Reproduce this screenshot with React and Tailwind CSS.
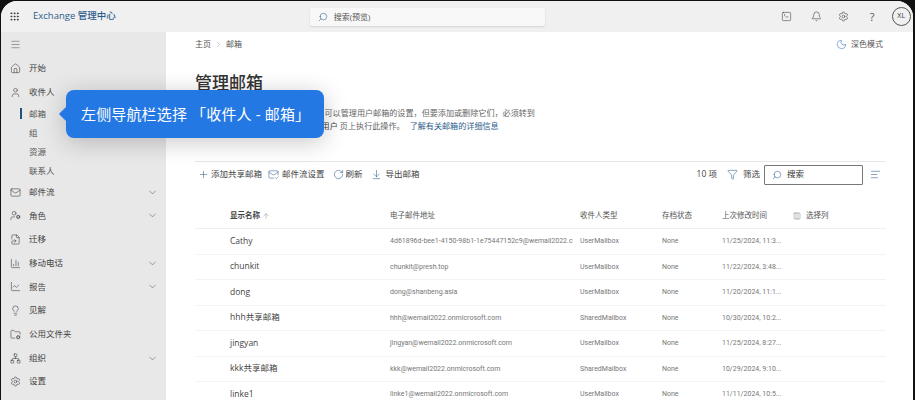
import React from 'react';
import {
  Grip, Search, SquareTerminal, Bell, Settings, Menu, Home, User, Mail, ChevronDown, ChevronRight,
  UserCog, FileSymlink, ChartLine, Lightbulb, FolderCog, Network, Moon, Plus, MailCheck, RotateCw,
  ArrowDownToLine, Filter, AlignRight, Columns3, ArrowUp, ChartColumn,
} from 'lucide-react';

const font = 'font-["Open_Sans","Noto_Sans_CJK_SC",sans-serif]';

const navTop = [
  { icon: Home, label: '开始' },
  { icon: User, label: '收件人', open: true },
];
const subNav = ['邮箱', '组', '资源', '联系人'];
const navBottom = [
  { icon: Mail, label: '邮件流', chevron: true },
  { icon: UserCog, label: '角色', chevron: true },
  { icon: FileSymlink, label: '迁移' },
  { icon: ChartColumn, label: '移动电话', chevron: true },
  { icon: ChartLine, label: '报告', chevron: true },
  { icon: Lightbulb, label: '见解' },
  { icon: FolderCog, label: '公用文件夹' },
  { icon: Network, label: '组织', chevron: true },
  { icon: Settings, label: '设置' },
];

const mailboxes = [
  { name: 'Cathy', email: '4d61896d-bee1-4150-98b1-1e75447152c9@wemail2022.c', type: 'UserMailbox', time: '11/25/2024, 11:3...' },
  { name: 'chunkit', email: 'chunkit@presh.top', type: 'UserMailbox', time: '11/22/2024, 3:48...' },
  { name: 'dong', email: 'dong@shanbeng.asia', type: 'UserMailbox', time: '11/20/2024, 11:1...' },
  { name: 'hhh共享邮箱', email: 'hhh@wemail2022.onmicrosoft.com', type: 'SharedMailbox', time: '10/30/2024, 10:2...' },
  { name: 'jingyan', email: 'jingyan@wemail2022.onmicrosoft.com', type: 'UserMailbox', time: '11/25/2024, 8:27...' },
  { name: 'kkk共享邮箱', email: 'kkk@wemail2022.onmicrosoft.com', type: 'SharedMailbox', time: '10/29/2024, 9:10...' },
  { name: 'linke1', email: 'linke1@wemail2022.onmicrosoft.com', type: 'UserMailbox', time: '11/11/2024, 10:5...' },
];

const rowGrid = 'grid grid-cols-[35px_160px_190px_82px_60px_71px_1fr] items-center';

function NavRow({ item }) {
  const Icon = item.icon;
  return (
    <div className="flex h-[23.7px] items-center pl-[9px] pr-[8px]">
      <Icon className="h-[11px] w-[11px] text-[#444]" strokeWidth={1.3} />
      <span className="ml-[8px] flex-1 text-[8.5px] text-[#444]">{item.label}</span>
      {item.chevron && <ChevronDown className="h-[11px] w-[11px] text-[#555]" strokeWidth={1.2} />}
    </div>
  );
}

function Sidebar() {
  return (
    <aside className="w-[165px] shrink-0 overflow-hidden bg-[#e8e8e8]">
      <div className="flex h-[25px] items-center pl-[9px]">
        <Menu className="h-[11px] w-[11px] text-[#555]" strokeWidth={1.2} />
      </div>
      {navTop.map((item) => (
        <NavRow key={item.label} item={item} />
      ))}
      <div>
        {subNav.map((label, i) => (
          <div key={label} className="flex h-[19px] items-center pl-[19px]">
            <span className={`h-[11px] w-[2px] ${i === 0 ? 'bg-[#23527f]' : 'bg-transparent'}`} />
            <span className="ml-[7px] text-[8.5px] text-[#555]">{label}</span>
          </div>
        ))}
      </div>
      <div>
        {navBottom.map((item) => (
          <NavRow key={item.label} item={item} />
        ))}
      </div>
    </aside>
  );
}

function Header() {
  return (
    <header className="flex h-[31px] shrink-0 items-center bg-[#f0f0f0]">
      <Grip className="ml-[8px] h-[11px] w-[11px] text-[#333]" strokeWidth={2} />
      <span className="ml-[13px] text-[9.5px] font-medium text-[#2d5c8c]">Exchange 管理中心</span>
      <div className="ml-[194px] flex h-[18px] w-[235px] items-center rounded-[2px] bg-[#f8f8f8] pl-[8px] shadow-[0_1px_2px_rgba(0,0,0,0.12)]">
        <Search className="h-[10px] w-[10px] -scale-x-100 text-[#2d5c8c]" strokeWidth={1.3} />
        <span className="ml-[6px] text-[8px] text-[#555]">搜索(预览)</span>
      </div>
      <div className="ml-[236px] flex items-center">
        <SquareTerminal className="h-[11px] w-[11px] text-[#444]" strokeWidth={1.3} />
        <Bell className="ml-[19px] h-[11px] w-[11px] text-[#444]" strokeWidth={1.3} />
        <Settings className="ml-[16px] h-[11px] w-[11px] text-[#444]" strokeWidth={1.3} />
        <span className="ml-[18px] w-[11px] text-center text-[11px] leading-none text-[#555]">?</span>
        <span className="ml-[14px] flex h-[19px] w-[19px] items-center justify-center rounded-full border border-[#555] text-[7px] text-[#333]">XL</span>
      </div>
    </header>
  );
}

function Toolbar() {
  return (
    <div className="flex h-[26px] items-center border-t border-[#e8e8e8] text-[8.5px] text-[#444]">
      <Plus className="ml-[3px] h-[11px] w-[11px] text-[#2d5c8c]" strokeWidth={1.2} />
      <span className="ml-[2px]">添加共享邮箱</span>
      <MailCheck className="ml-[6px] h-[11px] w-[11px] text-[#2d5c8c]" strokeWidth={1.2} />
      <span className="ml-[3px]">邮件流设置</span>
      <RotateCw className="ml-[8px] h-[11px] w-[11px] text-[#2d5c8c]" strokeWidth={1.2} />
      <span className="ml-[2px]">刷新</span>
      <ArrowDownToLine className="ml-[8px] h-[11px] w-[11px] text-[#2d5c8c]" strokeWidth={1.2} />
      <span className="ml-[4px]">导出邮箱</span>
      <span className="ml-auto">10 项</span>
      <Filter className="ml-[10px] h-[11px] w-[11px] text-[#2d5c8c]" strokeWidth={1.2} />
      <span className="ml-[5px]">筛选</span>
      <div className="ml-[4px] flex h-[20px] w-[99px] items-center rounded-[1px] border border-[#777] pl-[7px]">
        <Search className="h-[10px] w-[10px] -scale-x-100 text-[#2d5c8c]" strokeWidth={1.3} />
        <span className="ml-[5px] text-[#333]">搜索</span>
      </div>
      <AlignRight className="ml-[7px] mr-[5px] h-[11px] w-[11px] -scale-x-100 text-[#2d5c8c]" strokeWidth={1.2} />
    </div>
  );
}

function MailboxTable() {
  return (
    <div className="mt-[17px]">
      <div className={`${rowGrid} h-[25px] border-b border-[#efefef] text-[7.5px] text-[#555]`}>
        <span />
        <span className="flex items-center font-semibold text-[#444]">
          显示名称
          <ArrowUp className="ml-[2px] h-[8px] w-[8px] text-[#777]" strokeWidth={1.2} />
        </span>
        <span>电子邮件地址</span>
        <span>收件人类型</span>
        <span>存档状态</span>
        <span>上次修改时间</span>
        <span className="flex items-center">
          <Columns3 className="h-[8px] w-[8px] text-[#666]" strokeWidth={1.2} />
          <span className="ml-[5px]">选择列</span>
        </span>
      </div>
      {mailboxes.map((m) => (
        <div key={m.name} className={`${rowGrid} h-[25.5px] border-b border-[#f3f3f3] font-['Roboto','Noto_Sans_CJK_SC',sans-serif] text-[7px] text-[#777]`}>
          <span />
          <span className={`${font} text-[8.5px] text-[#444]`}>{m.name}</span>
          <span className="whitespace-nowrap">{m.email}</span>
          <span>{m.type}</span>
          <span>None</span>
          <span className="whitespace-nowrap">{m.time}</span>
          <span />
        </div>
      ))}
    </div>
  );
}

function Callout() {
  return (
    <div className="absolute left-[65px] top-[89px] flex h-[48px] w-[258px] items-center rounded-[8px] bg-[#2478e4] pl-[15px] shadow-[0_4px_24px_rgba(0,0,0,0.22)]">
      <span className="absolute left-[-5px] top-[19px] h-[10px] w-[10px] rotate-45 rounded-[1px] bg-[#2478e4]" />
      <span className="relative whitespace-nowrap text-[15px] tracking-[0.15px] text-white">左侧导航栏选择 「收件人 - 邮箱」</span>
    </div>
  );
}

export default function App() {
  return (
    <div className={`${font} h-[400px] w-[915px] overflow-hidden bg-[#111] pl-px pr-[2px] pt-px`}>
      <div className="relative flex h-[399px] flex-col overflow-hidden rounded-t-[16px] bg-white">
        <Header />
        <div className="flex min-h-0 flex-1">
          <Sidebar />
          <main className="min-w-0 flex-1 pl-[29px] pr-[27px]">
            <div className="flex h-[24px] items-center text-[8px] text-[#555]">
              <span>主页</span>
              <ChevronRight className="mx-[3px] h-[9px] w-[9px] text-[#888]" strokeWidth={1.2} />
              <span>邮箱</span>
              <span className="ml-auto flex items-center pr-[3px]">
                <Moon className="h-[11px] w-[11px] text-[#3b78c4]" strokeWidth={1.3} />
                <span className="ml-[4px] text-[8px]">深色模式</span>
              </span>
            </div>
            <h1 className="mt-[15px] text-[17px] font-medium leading-[24px] text-[#333]">管理邮箱</h1>
            <div className="mt-[11px] whitespace-nowrap text-[8.1px] leading-[13px] text-[#666]">
              <p>此页面列出组织中的所有用户邮箱，可以管理用户邮箱的设置，但要添加或删除它们，必须转到</p>
              <p>
                Microsoft 365 管理中心中的活动<span className="ml-[8px] text-[#444]">用户</span> 页上执行此操作。
                <span className="ml-[5px] text-[#2d5c8c]">了解有关邮箱的详细信息</span>
              </p>
            </div>
            <div className="mt-[29px]">
              <Toolbar />
            </div>
            <MailboxTable />
          </main>
        </div>
        <Callout />
      </div>
    </div>
  );
}
